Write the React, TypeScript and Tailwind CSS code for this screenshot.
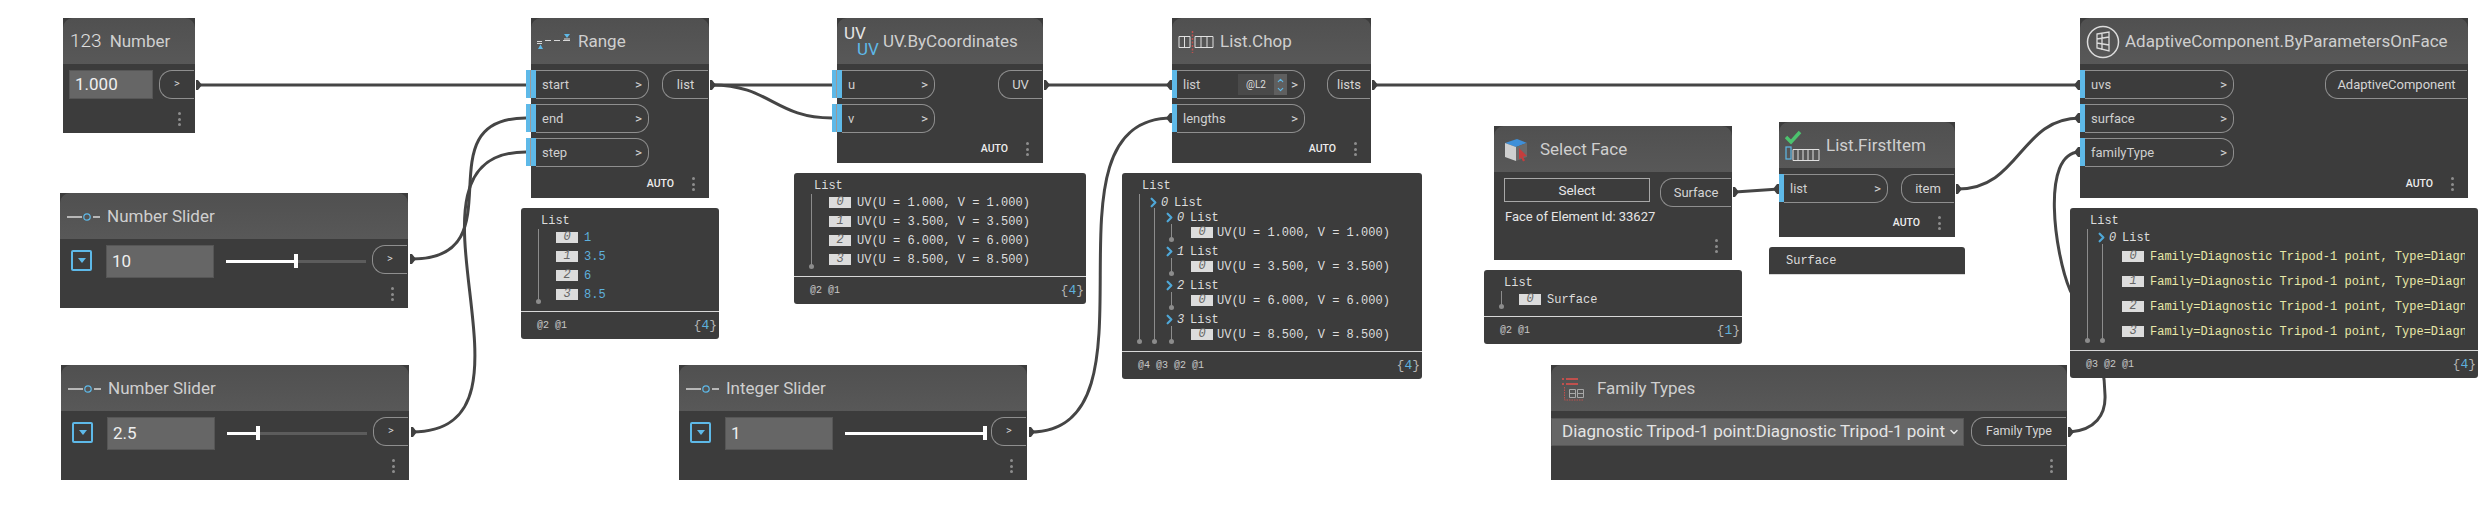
import type { ReactNode } from "react";
import { ChevronDown, ChevronRight, ChevronUp } from "lucide-react";

const mono = "font-['Liberation_Mono',monospace]";

function Dots() {
  return (
    <div className="flex w-[3px] flex-col gap-[2.5px]">
      <span className="h-[3px] w-[3px] rounded-full bg-[#8d8d8d]" />
      <span className="h-[3px] w-[3px] rounded-full bg-[#8d8d8d]" />
      <span className="h-[3px] w-[3px] rounded-full bg-[#8d8d8d]" />
    </div>
  );
}

function Node({
  className,
  title,
  icon,
  auto,
  children,
}: {
  className: string;
  title: string;
  icon: ReactNode;
  auto?: boolean;
  children: ReactNode;
}) {
  return (
    <div className={`absolute flex flex-col bg-[#3c3c3c] ${className}`}>
      <div className="flex h-[46px] shrink-0 items-center rounded-t-[10px] bg-gradient-to-b from-[#505050] to-[#585858] pt-[1px] text-[17px] text-[#cfcfcf]">
        {icon}
        <span className="whitespace-nowrap">{title}</span>
      </div>
      <div className="min-h-0 flex-1">{children}</div>
      <div className="flex h-[28px] shrink-0 items-center justify-end gap-[18px] pr-[14px]">
        {auto && <span className="text-[10.5px] font-medium text-[#eeeeee]">AUTO</span>}
        <Dots />
      </div>
    </div>
  );
}

function Input({ name, className, selected, children }: { name: string; className: string; selected?: boolean; children?: ReactNode }) {
  return (
    <div className={`relative flex h-[29px] ${className}`}>
      {selected && <span className="absolute -left-[5px] top-0 h-[28px] w-[4px] bg-[#5eb9e8]" />}
      {selected && <span className="absolute -left-[1px] top-0 h-[28px] w-[1px] bg-[#9a9a9a]" />}
      <span className="h-[28px] w-[5px] shrink-0 bg-[#5eb9e8]" />
      <div className="flex min-w-0 flex-1 items-center justify-between rounded-r-[13px] border-y border-r border-[#8f8f8f] pl-[6px] pr-[6px] text-[13px] text-[#cfcfcf]">
        <span>{name}</span>
        {children}
        <span className="text-[13.5px] text-[#d5d5d5]">&gt;</span>
      </div>
    </div>
  );
}

function Output({ name, className, size = "text-[13px]" }: { name: string; className: string; size?: string }) {
  return (
    <div className={`flex h-[29px] items-center justify-center rounded-l-[13px] border-y border-l border-[#8f8f8f] text-[#d5d5d5] ${size} ${className}`}>
      {name}
    </div>
  );
}

function ValueBox({ value, className }: { value: string; className: string }) {
  return (
    <div className={`flex items-center border border-[#565656] bg-[#666666] pl-[5px] text-[17px] text-[#efefef] ${className}`}>
      {value}
    </div>
  );
}

function SliderIcon() {
  return (
    <svg className="ml-[7px] mr-[7px] shrink-0" width="33" height="10" viewBox="0 0 33 10" fill="none">
      <path d="M0 5h15M26 5h7" stroke="#d8d8d8" strokeWidth="1.3" />
      <circle cx="20" cy="5" r="3.2" stroke="#5eb9e8" strokeWidth="1.2" />
    </svg>
  );
}

function Slider({ className, title, value, thumb, fill }: { className: string; title: string; value: string; thumb: string; fill: string }) {
  return (
    <Node className={`h-[115px] w-[348px] ${className}`} title={title} icon={<SliderIcon />}>
      <div className="flex h-[39px] items-start pl-[11px] pt-[6px]">
        <div className="mt-[5px] flex h-[21px] w-[21px] items-center justify-center rounded-[2px] border-2 border-[#5eb9e8]">
          <span className="h-0 w-0 border-x-[4px] border-t-[5px] border-x-transparent border-t-[#5eb9e8]" />
        </div>
        <ValueBox value={value} className="ml-[14px] h-[33px] w-[108px]" />
        <div className="relative ml-[12px] mt-[15px] h-[3px] w-[140px] bg-[#5c5c5c]">
          <span className={`absolute left-0 top-0 h-[3px] bg-white ${fill}`} />
          <span className={`absolute -top-[6px] h-[14px] w-[4px] bg-white ${thumb}`} />
        </div>
        <Output name=">" size="text-[11px]" className="ml-[6px] w-[35px]" />
      </div>
    </Node>
  );
}

function Idx({ n }: { n: number }) {
  return (
    <span className={`mb-[1px] inline-flex h-[11px] w-[22px] shrink-0 items-center justify-center bg-[#dcdcdc] text-[12px] italic text-[#666666] ${mono}`}>
      {n}
    </span>
  );
}

function Guide({ className }: { className: string }) {
  return (
    <span className={`absolute w-px bg-[#8c8c8c] ${className}`}>
      <span className="absolute -bottom-[2px] -left-[2px] h-[5px] w-[5px] rounded-full bg-[#8c8c8c]" />
    </span>
  );
}

function Preview({ className, levels, count, children }: { className: string; levels: string; count: string; children: ReactNode }) {
  return (
    <div className={`absolute flex flex-col rounded-[3px] bg-[#3c3c3c] text-[12px] text-[#dddddd] ${mono} ${className}`}>
      <div className="relative min-h-0 flex-1 overflow-hidden pl-[20px] pt-[7px]">
        <div className="h-[13px] leading-[13px]">List</div>
        {children}
      </div>
      <div className="flex h-[28px] shrink-0 items-center justify-between border-t border-[#d8d8d8] pl-[16px] pr-[2px]">
        <span className="text-[10px] text-[#c8c8c8]">{levels}</span>
        <span className="text-[13px] text-[#b5b5b5]">
          {"{"}
          <span className="text-[#5eb0dc]">{count}</span>
          {"}"}
        </span>
      </div>
    </div>
  );
}

function Rows({ items, color }: { items: string[]; color?: string }) {
  return (
    <div className="ml-[15px] flex flex-col">
      {items.map((t, i) => (
        <div key={i} className="flex h-[19px] items-center gap-[6px] whitespace-nowrap">
          <Idx n={i} />
          <span className={color}>{t}</span>
        </div>
      ))}
    </div>
  );
}

function Chev({ className }: { className: string }) {
  return <ChevronRight size={15} strokeWidth={3.5} className={`shrink-0 text-[#4fa8d8] ${className}`} />;
}

function ChopGroup({ n, text }: { n: number; text: string }) {
  return (
    <div className="h-[34px]">
      <div className="flex h-[15px] items-center whitespace-nowrap pl-[24px]">
        <Chev className="-ml-[4px]" />
        <span className="w-[13px] italic">{n}</span>
        List
      </div>
      <div className="flex h-[15px] items-center gap-[4px] whitespace-nowrap pl-[49px]">
        <Idx n={0} />
        <span>{text}</span>
      </div>
    </div>
  );
}

function Port({ x, y }: { x: number; y: number }) {
  return <polygon points={`${x},${y - 5} ${x + 2},${y - 5} ${x + 6},${y} ${x + 2},${y + 5} ${x},${y + 5}`} fill="#404040" />;
}

function InPort({ x, y }: { x: number; y: number }) {
  return <polygon points={`${x},${y - 5} ${x - 2},${y - 5} ${x - 6},${y} ${x - 2},${y + 5} ${x},${y + 5}`} fill="#404040" />;
}

function Wires() {
  const wires = [
    "M198 85H526",
    "M712 85H832",
    "M712 85C770 85 775 118 832 118",
    "M412 259C520 259 420 118 526 118",
    "M412 432C560 432 380 152 526 152",
    "M1046 85H1172",
    "M1030 432C1170 432 1030 118 1172 118",
    "M1374 85H2080",
    "M1735 192L1779 189",
    "M1958 189C2020 189 2020 118 2080 118",
    "M2070 432C2095 430 2106 415 2105 395C2104 340 2080 310 2070 290C2055 255 2040 152 2080 152",
  ];
  return (
    <svg className="absolute inset-0" width="2478" height="526" fill="none">
      {wires.map((d) => (
        <path key={d} d={d} stroke="#454545" strokeWidth="3" />
      ))}
      <Port x={196} y={85} />
      <Port x={710} y={85} />
      <Port x={1044} y={85} />
      <Port x={1372} y={85} />
      <Port x={1733} y={192} />
      <Port x={1956} y={189} />
      <Port x={2068} y={432} />
      <Port x={410} y={259} />
      <Port x={411} y={432} />
      <Port x={1029} y={432} />
      <InPort x={1172} y={85} />
      <InPort x={1172} y={118} />
      <InPort x={1779} y={189} />
      <InPort x={2080} y={85} />
      <InPort x={2080} y={118} />
      <InPort x={2080} y={152} />
    </svg>
  );
}

const uvRows = ["UV(U = 1.000, V = 1.000)", "UV(U = 3.500, V = 3.500)", "UV(U = 6.000, V = 6.000)", "UV(U = 8.500, V = 8.500)"];
const familyRow = "Family=Diagnostic Tripod-1 point, Type=Diagn";

export default function App() {
  return (
    <div className="relative h-[526px] w-[2478px] overflow-hidden bg-white font-['Roboto',sans-serif]">
      <Wires />

      <Node
        className="left-[63px] top-[18px] h-[115px] w-[132px]"
        title="Number"
        icon={<span className="ml-[7px] mr-[8px] text-[19px] font-light text-[#e0e0e0]">123</span>}
      >
        <div className="flex items-start pl-[6px] pt-[6px]">
          <ValueBox value="1.000" className="h-[29px] w-[84px]" />
          <Output name=">" size="text-[11px]" className="ml-[6px] w-[35px]" />
        </div>
      </Node>

      <Slider className="left-[60px] top-[193px]" title="Number Slider" value="10" thumb="left-[68px]" fill="w-[70px]" />
      <Slider className="left-[61px] top-[365px]" title="Number Slider" value="2.5" thumb="left-[29px]" fill="w-[30px]" />
      <Slider className="left-[679px] top-[365px]" title="Integer Slider" value="1" thumb="left-[138px]" fill="w-[140px]" />

      <Node
        className="left-[531px] top-[18px] h-[180px] w-[178px]"
        title="Range"
        auto
        icon={
          <svg className="ml-[6px] mr-[7px] shrink-0" width="34" height="15" viewBox="0 0 34 15" fill="none">
            <path d="M0 7.500h5M8 6.500h6M17 6.500h6M26 6.500h7M0 9.500h5M27 5h6" stroke="#d8d8d8" strokeWidth="1.200" />
            <path d="M27 0h6l-3 4zM1 15h5l-2.500-4.500z" fill="#5eb9e8" />
          </svg>
        }
      >
        <div className="flex justify-between pt-[6px]">
          <div className="flex flex-col gap-[5px]">
            <Input name="start" selected className="w-[118px]" />
            <Input name="end" selected className="w-[118px]" />
            <Input name="step" selected className="w-[118px]" />
          </div>
          <Output name="list" className="mr-[1px] w-[46px]" />
        </div>
      </Node>

      <Preview className="left-[521px] top-[208px] h-[131px] w-[198px]" levels="@2 @1" count="4">
        <Guide className="left-[17px] top-[21px] h-[73px]" />
        <Rows items={["1", "3.5", "6", "8.5"]} color="text-[#5eb0dc]" />
      </Preview>

      <Node
        className="left-[837px] top-[18px] h-[145px] w-[206px]"
        title="UV.ByCoordinates"
        auto
        icon={
          <div className="relative ml-[7px] mr-[8px] h-[34px] w-[31px] shrink-0 text-[17px] leading-[17px]">
            <span className="absolute left-0 top-0 text-[#e4e4e4]">UV</span>
            <span className="absolute left-[13px] top-[16px] text-[#5eb9e8]">UV</span>
          </div>
        }
      >
        <div className="flex justify-between pt-[6px]">
          <div className="flex flex-col gap-[5px]">
            <Input name="u" selected className="w-[98px]" />
            <Input name="v" selected className="w-[98px]" />
          </div>
          <Output name="UV" className="mr-[1px] w-[44px]" />
        </div>
      </Node>

      <Preview className="left-[794px] top-[173px] h-[131px] w-[292px]" levels="@2 @1" count="4">
        <Guide className="left-[17px] top-[21px] h-[73px]" />
        <Rows items={uvRows} />
      </Preview>

      <Node
        className="left-[1172px] top-[18px] h-[145px] w-[199px]"
        title=""
        auto
        icon={
          <div className="flex items-center">
            <svg className="ml-[6px] shrink-0" width="36" height="22" viewBox="0 0 36 22" fill="none">
              <path d="M1 5.500h11v11H1zM6.500 5.500v11" stroke="#e0e0e0" />
              <path d="M14.500 0v22" stroke="#c0504d" strokeWidth="1.500" strokeDasharray="2 1.500" />
              <path d="M17 5.500h18v11H17zM23 5.500v11M29 5.500v11" stroke="#e0e0e0" />
            </svg>
            <span className="ml-[6px] whitespace-nowrap">List.Chop</span>
          </div>
        }
      >
        <div className="flex justify-between pt-[6px]">
          <div className="flex flex-col gap-[5px]">
            <Input name="list" className="w-[133px]">
              <div className="ml-auto mr-[4px] flex items-center">
                <span className="flex h-[21px] w-[36px] items-center justify-center bg-[#4a4a4a] text-[10px] text-[#dddddd]">@L2</span>
                <span className="flex h-[21px] w-[13px] flex-col items-center justify-center bg-[#5f5f5f] text-[#5eb9e8]">
                  <ChevronUp size={9} strokeWidth={3} />
                  <ChevronDown size={9} strokeWidth={3} />
                </span>
              </div>
            </Input>
            <Input name="lengths" className="w-[133px]" />
          </div>
          <Output name="lists" className="mr-[1px] w-[43px]" />
        </div>
      </Node>

      <Preview className="left-[1122px] top-[173px] h-[206px] w-[300px]" levels="@4 @3 @2 @1" count="4">
        <Guide className="left-[17px] top-[21px] h-[148px]" />
        <Guide className="left-[32px] top-[35px] h-[134px]" />
        <Guide className="left-[49px] top-[51px] h-[16px]" />
        <Guide className="left-[49px] top-[85px] h-[16px]" />
        <Guide className="left-[49px] top-[119px] h-[16px]" />
        <Guide className="left-[49px] top-[153px] h-[16px]" />
        <div className="mt-[2px] flex h-[15px] items-center whitespace-nowrap pl-[8px]">
          <Chev className="-ml-[4px]" />
          <span className="w-[13px] italic">0</span>
          List
        </div>
        {uvRows.map((t, i) => (
          <ChopGroup key={t} n={i} text={t} />
        ))}
      </Preview>

      <Node
        className="left-[1494px] top-[126px] h-[134px] w-[238px]"
        title="Select Face"
        icon={
          <svg className="ml-[10px] mr-[12px] shrink-0" width="24" height="24" viewBox="0 0 24 24">
            <path d="M1 5l12-4 10 4-11 4z" fill="#3f8fd8" />
            <path d="M1 5l11 4v14L1 19z" fill="#cfcfcf" />
            <path d="M12 9l11-4v14l-11 4z" fill="#6a6a6a" />
            <path d="M15 10l8 8-4 .500 2 4-2 1-2-4-2 2z" fill="#c43d3d" />
          </svg>
        }
      >
        <div className="flex items-start pl-[10px] pt-[6px]">
          <div className="w-[146px]">
            <div className="flex h-[24px] items-center justify-center border border-[#a8a8a8] text-[13.500px] text-[#e6e6e6]">Select</div>
            <div className="ml-[1px] mt-[5px] whitespace-nowrap text-[13px] text-[#e6e6e6]">Face of Element Id: 33627</div>
          </div>
          <Output name="Surface" className="ml-[10px] w-[71px]" />
        </div>
      </Node>

      <Preview className="left-[1484px] top-[270px] h-[74px] w-[258px]" levels="@2 @1" count="1">
        <Guide className="left-[17px] top-[21px] h-[16px]" />
        <Rows items={["Surface"]} />
      </Preview>

      <Node
        className="left-[1779px] top-[122px] h-[115px] w-[176px]"
        title="List.FirstItem"
        auto
        icon={
          <svg className="ml-[6px] mr-[6px] shrink-0" width="35" height="32" viewBox="0 0 35 32" fill="none">
            <path d="M1 7l5 5L15 2" stroke="#4cc36e" strokeWidth="3.500" />
            <rect x="1" y="17" width="5" height="12" stroke="#5eb9e8" strokeWidth="1.200" />
            <path d="M8 19.500h26v11H8zM13 19.500v11M18 19.500v11M23 19.500v11M28 19.500v11" stroke="#e0e0e0" />
          </svg>
        }
      >
        <div className="flex justify-between pt-[6px]">
          <Input name="list" className="w-[109px]" />
          <Output name="item" className="mr-[1px] w-[53px]" />
        </div>
      </Node>

      <div className={`absolute left-[1769px] top-[247px] flex h-[28px] w-[196px] items-center rounded-t-[3px] border-b border-[#d8d8d8] bg-[#3c3c3c] pl-[17px] text-[12px] text-[#dddddd] ${mono}`}>
        Surface
      </div>

      <Node
        className="left-[1551px] top-[365px] h-[115px] w-[516px]"
        title="Family Types"
        icon={
          <svg className="ml-[11px] mr-[12px] shrink-0" width="23" height="24" viewBox="0 0 23 24" fill="none">
            <path d="M0 2h2M0 7h2M4 2h12M4 7h12" stroke="#c0504d" strokeWidth="2" />
            <path d="M2.500 10v13h19" stroke="#c0504d" strokeDasharray="1.500 1" />
            <path d="M7.500 12.500h6v8h-6zM15.500 12.500h6v8h-6zM7.500 16.500h6M15.500 16.500h6" stroke="#a8a8a8" />
          </svg>
        }
      >
        <div className="flex items-start pt-[7px]">
          <div className="flex h-[28px] w-[413px] items-center border border-[#565656] bg-[#666666] pl-[10px] text-[17px] text-[#e4e4e4]">
            <span className="flex-1 whitespace-nowrap">Diagnostic Tripod-1 point:Diagnostic Tripod-1 point</span>
            <ChevronDown size={12} strokeWidth={3} className="mr-[3px] text-[#e4e4e4]" />
          </div>
          <Output name="Family Type" size="text-[12.500px]" className="ml-[7px] -mt-[1px] w-[95px]" />
        </div>
      </Node>

      <Node
        className="left-[2080px] top-[18px] h-[180px] w-[388px]"
        title="AdaptiveComponent.ByParametersOnFace"
        auto
        icon={
          <svg className="ml-[6px] mr-[5px] shrink-0" width="34" height="34" viewBox="0 0 34 34" fill="none">
            <circle cx="17" cy="17" r="15.500" stroke="#dcdcdc" strokeWidth="1.500" />
            <path d="M11 9l12 -2v19l-12-3zM11 14l12-2M11 18l12 2M16 8v17" stroke="#dcdcdc" strokeWidth="1.300" />
          </svg>
        }
      >
        <div className="flex justify-between pt-[6px]">
          <div className="flex flex-col gap-[5px]">
            <Input name="uvs" className="w-[154px]" />
            <Input name="surface" className="w-[154px]" />
            <Input name="familyType" className="w-[154px]" />
          </div>
          <Output name="AdaptiveComponent" className="mr-[1px] w-[142px]" />
        </div>
      </Node>

      <Preview className="left-[2070px] top-[208px] h-[170px] w-[408px]" levels="@3 @2 @1" count="4">
        <Guide className="left-[17px] top-[21px] h-[112px]" />
        <Guide className="left-[32px] top-[36px] h-[97px]" />
        <div className="mt-[2px] flex h-[15px] items-center whitespace-nowrap pl-[8px]">
          <Chev className="-ml-[4px]" />
          <span className="w-[13px] italic">0</span>
          List
        </div>
        <div className="-mt-[1px] ml-[32px] w-[343px] overflow-hidden">
          {[0, 1, 2, 3].map((i) => (
            <div key={i} className="flex h-[25px] items-center gap-[6px] whitespace-nowrap text-[#e8e8a8]">
              <Idx n={i} />
              <span>{familyRow}</span>
            </div>
          ))}
        </div>
      </Preview>
    </div>
  );
}
